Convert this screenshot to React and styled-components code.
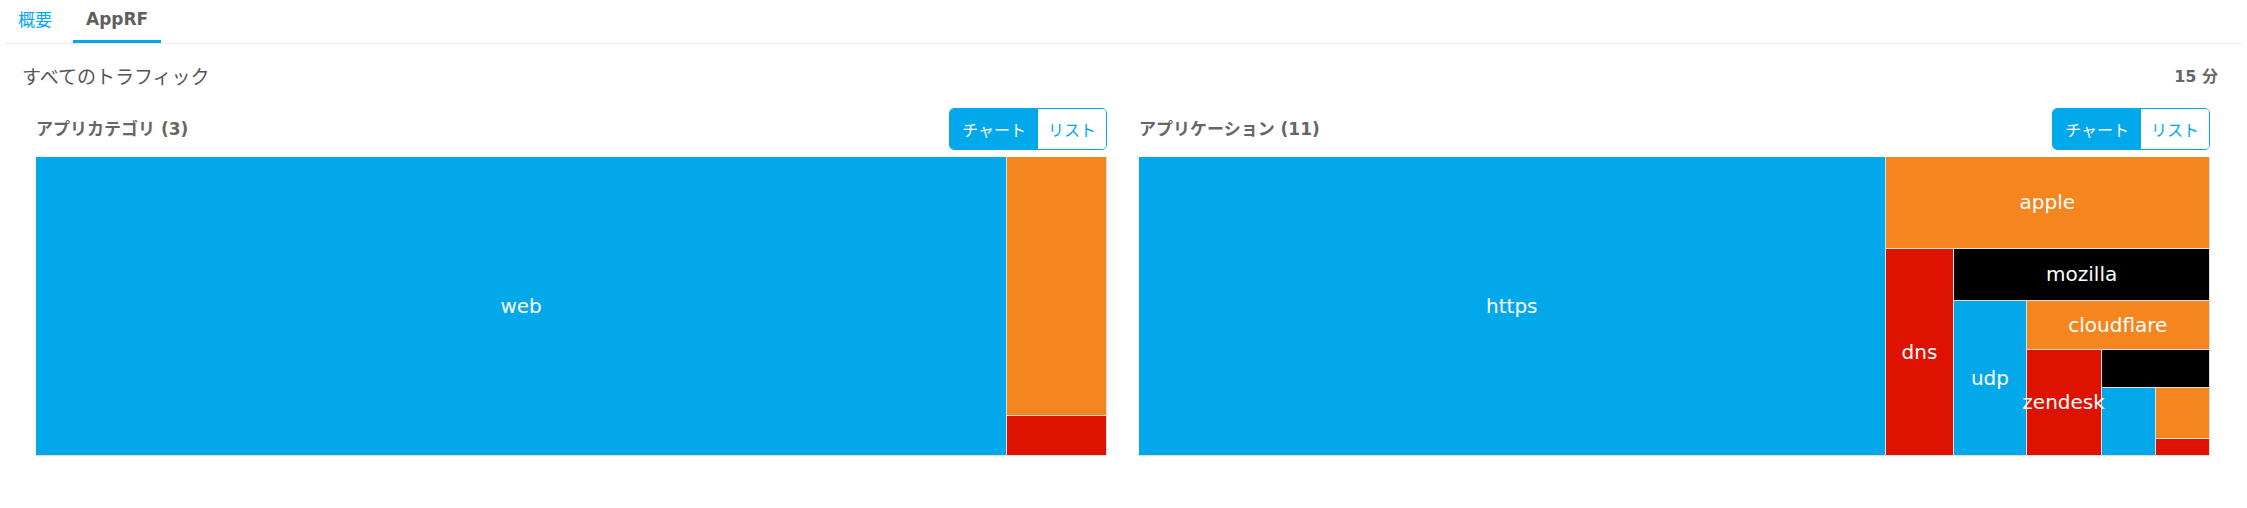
import styled, { createGlobalStyle } from "styled-components";

const BLUE = "#03a8eb";
const ORANGE = "#f5861f";
const RED = "#dd1200";
const BLACK = "#000000";

const GlobalStyle = createGlobalStyle`
  html, body {
    margin: 0;
    padding: 0;
    background: #ffffff;
  }
  body {
    font-family: "DejaVu Sans", "Noto Sans CJK JP", sans-serif;
    color: #555;
  }
`;

// treemap data: a node is either a leaf {color, label, size} or a split {dir, size, children}
const categories = {
  dir: "row",
  children: [
    { size: 972, color: BLUE, label: "web" },
    {
      size: 99,
      dir: "column",
      children: [
        { size: 259, color: ORANGE },
        { size: 39, color: RED },
      ],
    },
  ],
};

const applications = {
  dir: "row",
  children: [
    { size: 747, color: BLUE, label: "https" },
    {
      size: 324,
      dir: "column",
      children: [
        { size: 91, color: ORANGE, label: "apple" },
        {
          size: 207,
          dir: "row",
          children: [
            { size: 68, color: RED, label: "dns" },
            {
              size: 256,
              dir: "column",
              children: [
                { size: 52, color: BLACK, label: "mozilla" },
                {
                  size: 155,
                  dir: "row",
                  children: [
                    { size: 72, color: BLUE, label: "udp" },
                    {
                      size: 184,
                      dir: "column",
                      children: [
                        { size: 48, color: ORANGE, label: "cloudflare" },
                        {
                          size: 107,
                          dir: "row",
                          children: [
                            { size: 75, color: RED, label: "zendesk" },
                            {
                              size: 109,
                              dir: "column",
                              children: [
                                { size: 38, color: BLACK },
                                {
                                  size: 69,
                                  dir: "row",
                                  children: [
                                    { size: 55, color: BLUE },
                                    {
                                      size: 54,
                                      dir: "column",
                                      children: [
                                        { size: 52, color: ORANGE },
                                        { size: 17, color: RED },
                                      ],
                                    },
                                  ],
                                },
                              ],
                            },
                          ],
                        },
                      ],
                    },
                  ],
                },
              ],
            },
          ],
        },
      ],
    },
  ],
};

function Node({ node }) {
  const grow = node.size || 1;
  if (node.children) {
    return (
      <Split $dir={node.dir} style={{ flexGrow: grow }}>
        {node.children.map((c, i) => (
          <Node key={i} node={c} />
        ))}
      </Split>
    );
  }
  return (
    <Leaf $color={node.color} style={{ flexGrow: grow }}>
      {node.label && <Label>{node.label}</Label>}
    </Leaf>
  );
}

function Chart({ title, data }) {
  return (
    <ChartBox>
      <ChartHeader>
        <ChartTitle>{title}</ChartTitle>
        <Toggle>
          <ToggleBtn $active>チャート</ToggleBtn>
          <ToggleBtn>リスト</ToggleBtn>
        </Toggle>
      </ChartHeader>
      <Treemap>
        <Node node={data} />
      </Treemap>
    </ChartBox>
  );
}

export default function App() {
  return (
    <Page>
      <GlobalStyle />
      <Tabs>
        <Tab>概要</Tab>
        <Tab $active>AppRF</Tab>
      </Tabs>
      <SectionHeader>
        <SectionTitle>すべてのトラフィック</SectionTitle>
        <Period>15 分</Period>
      </SectionHeader>
      <Charts>
        <Chart title="アプリカテゴリ (3)" data={categories} />
        <Chart title="アプリケーション (11)" data={applications} />
      </Charts>
    </Page>
  );
}

const Page = styled.div`
  width: 100%;
  height: 508px;
  overflow: hidden;
`;

const Tabs = styled.div`
  display: flex;
  margin: 0 5px;
  height: 43px;
  border-bottom: 1px solid #ececec;
`;

const Tab = styled.div`
  display: flex;
  align-items: center;
  padding: 0 13px 3px;
  margin-right: 8px;
  font-size: 17px;
  font-weight: ${(p) => (p.$active ? 700 : 400)};
  color: ${(p) => (p.$active ? "#5f5f5f" : BLUE)};
  border-bottom: 3px solid ${(p) => (p.$active ? BLUE : "transparent")};
  box-sizing: border-box;
  height: 43px;
  cursor: pointer;
`;

const SectionHeader = styled.div`
  display: flex;
  justify-content: space-between;
  align-items: center;
  padding: 0 29px 2px 22px;
  height: 64px;
  box-sizing: border-box;
`;

const SectionTitle = styled.div`
  font-size: 19px;
  color: #555;
`;

const Period = styled.div`
  font-size: 16px;
  font-weight: 700;
  color: #666;
`;

const Charts = styled.div`
  display: grid;
  grid-template-columns: 1fr 1fr;
  gap: 32px;
  padding: 0 37px 0 36px;
`;

const ChartBox = styled.div`
  display: flex;
  flex-direction: column;
  gap: 7px;
`;

const ChartHeader = styled.div`
  display: flex;
  justify-content: space-between;
  align-items: center;
  height: 42px;
`;

const ChartTitle = styled.div`
  font-size: 17px;
  font-weight: 600;
  color: #666;
  padding-bottom: 3px;
`;

const Toggle = styled.div`
  display: flex;
  height: 42px;
  border: 1px solid ${BLUE};
  border-radius: 5px;
  overflow: hidden;
  box-sizing: border-box;
`;

const ToggleBtn = styled.div`
  display: flex;
  align-items: center;
  padding: 0 ${(p) => (p.$active ? "12px" : "10px")};
  font-size: 16px;
  color: ${(p) => (p.$active ? "#ffffff" : BLUE)};
  background: ${(p) => (p.$active ? BLUE : "#ffffff")};
  cursor: pointer;
`;

const Treemap = styled.div`
  display: flex;
  height: 299px;
  background: #dedede;
  padding: 0 1px 1px 0;
  box-sizing: border-box;
`;

const Split = styled.div`
  display: flex;
  flex-direction: ${(p) => p.$dir};
  flex-basis: 0;
  gap: 1px;
  min-width: 0;
  min-height: 0;
`;

const Leaf = styled.div`
  display: flex;
  align-items: center;
  justify-content: center;
  flex-basis: 0;
  min-width: 0;
  min-height: 0;
  background: ${(p) => p.$color};
`;

const Label = styled.span`
  position: relative;
  z-index: 1;
  color: #ffffff;
  font-size: 20px;
  white-space: nowrap;
`;
